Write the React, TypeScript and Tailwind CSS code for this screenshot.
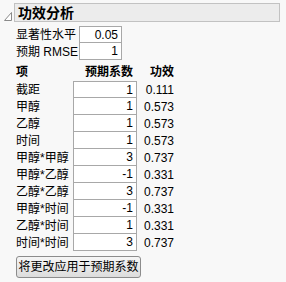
import React from 'react';

const rows = [
  { term: '截距', coef: '1', power: '0.111' },
  { term: '甲醇', coef: '1', power: '0.573' },
  { term: '乙醇', coef: '1', power: '0.573' },
  { term: '时间', coef: '1', power: '0.573' },
  { term: '甲醇*甲醇', coef: '3', power: '0.737' },
  { term: '甲醇*乙醇', coef: '-1', power: '0.331' },
  { term: '乙醇*乙醇', coef: '3', power: '0.737' },
  { term: '甲醇*时间', coef: '-1', power: '0.331' },
  { term: '乙醇*时间', coef: '1', power: '0.331' },
  { term: '时间*时间', coef: '3', power: '0.737' },
];

const font = { fontFamily: '"Liberation Sans", "Noto Sans CJK SC", sans-serif' };

export default function App() {
  return (
    <div className="w-[286px] h-[282px] bg-[#f8f8f8] text-[12px] text-black overflow-hidden" style={font}>
      {/* Outline header */}
      <div className="flex items-start pt-[3px] pl-[3px]">
        <svg width="10" height="19" viewBox="0 0 10 19" className="mr-px">
          <path d="M1.5 17.5 L8.5 17.5 L8.5 9.5 Z" fill="#ffffff" stroke="#8a8a8a" strokeWidth="1" />
        </svg>
        <div className="w-[266px] h-[19px] bg-[#ececec] border border-[#c2c2c2] flex items-center pl-[3px]">
          <span className="text-[14px] font-bold leading-none">功效分析</span>
        </div>
      </div>

      {/* Settings */}
      <div className="pl-[16px] mt-[4px]">
        <div className="flex items-center h-[17px]">
          <span className="w-[63px] whitespace-nowrap">显著性水平</span>
          <div className="w-[43px] h-[18px] bg-white border border-[#a8a8a8] text-right pr-[3px] leading-[16px]">0.05</div>
        </div>
        <div className="flex items-center h-[17px]">
          <span className="w-[63px] whitespace-nowrap">预期 RMSE</span>
          <div className="w-[43px] h-[18px] bg-white border border-[#a8a8a8] text-right pr-[3px] leading-[16px] -mt-px">1</div>
        </div>
      </div>

      {/* Table */}
      <div className="pl-[16px] mt-[3px]">
        <div className="flex items-center h-[18px] font-bold">
          <span className="w-[57px]">项</span>
          <span className="w-[60px] text-right">预期系数</span>
          <span className="w-[41px] text-right">功效</span>
        </div>
        <div className="flex flex-col">
          {rows.map((r, i) => (
            <div key={i} className="flex items-center h-[17px]">
              <span className="w-[57px] whitespace-nowrap">{r.term}</span>
              <div
                className={
                  'w-[64px] h-[18px] bg-white border border-[#a8a8a8] text-right pr-[3px] leading-[16px] ' +
                  (i === 0 ? '' : '-mt-px')
                }
              >
                {r.coef}
              </div>
              <span className="w-[37px] text-right">{r.power}</span>
            </div>
          ))}
        </div>
        <button className="mt-[5px] h-[22px] w-[125px] rounded-[3px] border border-[#8c8c8c] bg-gradient-to-b from-[#f6f6f6] to-[#dcdcdc] text-[12px] leading-none px-0 whitespace-nowrap flex items-center justify-center">
          将更改应用于预期系数
        </button>
      </div>
    </div>
  );
}
